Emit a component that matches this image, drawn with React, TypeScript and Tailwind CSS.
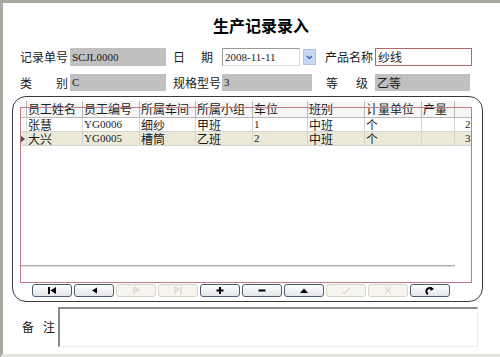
import React from 'react'

const cjk = "font-['Noto_Sans_CJK_SC',sans-serif]"
const serif = "font-['Liberation_Serif','Noto_Sans_CJK_SC',serif]"

const columns = [
  { title: '员工姓名', w: 'w-[56px]' },
  { title: '员工编号', w: 'w-[57px]' },
  { title: '所属车间', w: 'w-[56px]' },
  { title: '所属小组', w: 'w-[57px]' },
  { title: '车位', w: 'w-[55px]' },
  { title: '班别', w: 'w-[57px]' },
  { title: '计量单位', w: 'w-[57px]' },
  { title: '产量', w: 'w-[33px]' },
  { title: '', w: 'w-[40px]' },
]

const rows = [
  { cells: ['张慧', 'YG0006', '细纱', '甲班', '1', '中班', '个', '', '2'], current: false },
  { cells: ['大兴', 'YG0005', '槽筒', '乙班', '2', '中班', '个', '', '3'], current: true },
]

function NavIcon({ kind, disabled }: { kind: string; disabled?: boolean }) {
  const c = disabled ? '#cfcbb6' : '#000'
  return (
    <svg width="12" height="9" viewBox="0 0 12 9">
      {kind === 'first' && (
        <>
          <rect x="2" y="1" width="2" height="7" fill={c} />
          <polygon points="10,1 10,8 4.5,4.5" fill={c} />
        </>
      )}
      {kind === 'prev' && <polygon points="9,1.5 9,7.5 4,4.5" fill={c} />}
      {kind === 'next' && (
        <path d="M4 8 V1 L9 4 L5 5.5" fill="none" stroke={c} strokeWidth="1" />
      )}
      {kind === 'last' && (
        <>
          <path d="M3 8 V1 L7 3.5 L4 5.5" fill="none" stroke={c} strokeWidth="1" />
          <path d="M9 1 V8" stroke={c} strokeWidth="1" />
        </>
      )}
      {kind === 'add' && (
        <>
          <rect x="2.5" y="3.5" width="7" height="2" fill={c} />
          <rect x="5" y="1" width="2" height="7" fill={c} />
        </>
      )}
      {kind === 'del' && <rect x="2.5" y="3.5" width="7" height="2" fill={c} />}
      {kind === 'up' && <polygon points="2,7 10,7 6,2.5" fill={c} />}
      {kind === 'ok' && <path d="M2 6 L4 7.5 L10 2" fill="none" stroke={c} strokeWidth="1" />}
      {kind === 'cancel' && <path d="M3 1.5 L9 7.5 M9 1.5 L3 7.5" fill="none" stroke={c} strokeWidth="1" />}
      {kind === 'refresh' && (
        <>
          <path d="M4 8 A3 3 0 0 1 7 2.5" fill="none" stroke={c} strokeWidth="2" />
          <polygon points="6.5,0.5 10,3 6.5,5" fill={c} />
        </>
      )}
    </svg>
  )
}

const navButtons = [
  { kind: 'first' },
  { kind: 'prev' },
  { kind: 'next', disabled: true },
  { kind: 'last', disabled: true },
  { kind: 'add' },
  { kind: 'del' },
  { kind: 'up' },
  { kind: 'ok', disabled: true },
  { kind: 'cancel', disabled: true },
  { kind: 'refresh' },
]

export default function App() {
  return (
    <div className={`w-[500px] h-[357px] bg-white border-l-[3px] border-t-[3px] border-b-[3px] border-l-[#a9a9a1] border-t-[#a9a9a1] border-b-[#e4e4e0] overflow-hidden text-[#1a1a1a] ${cjk}`}>
      {/* title */}
      <div className="mt-[12px] h-[20px] pl-[210px] text-[16px] leading-[20px] font-bold text-black">
        生产记录录入
      </div>

      {/* row 1 */}
      <div className="mt-[13px] h-[18px] pl-[17px] flex items-stretch text-[12px]">
        <div className="w-[48px] flex items-center">记录单号</div>
        <div className={`ml-[2px] w-[96px] bg-[#c0c0c0] pl-[2px] flex items-center text-[11px] ${serif}`}>SCJL0000</div>
        <div className="ml-[7px] w-[40px] flex items-center justify-between">
          <span>日</span>
          <span>期</span>
        </div>
        <div className={`ml-[9px] w-[78px] bg-white border border-[#9a9a9a] border-r-[#dcdcdc] border-b-[#dcdcdc] pl-[2px] flex items-center text-[11px] ${serif}`}>2008-11-11</div>
        <div className="ml-[3px] w-[13px] my-[1px] bg-[#c9d7f6] border border-[#b0c0e6] flex items-center justify-center">
          <svg width="7" height="5" viewBox="0 0 7 5">
            <path d="M1 1 L3.5 3.5 L6 1" fill="none" stroke="#3060c0" strokeWidth="1.4" />
          </svg>
        </div>
        <div className="ml-[9px] w-[48px] flex items-center">产品名称</div>
        <div className="ml-[2px] w-[97px] bg-white border border-[#b06868] pl-[2px] flex items-center">纱线</div>
      </div>

      {/* row 2 */}
      <div className="mt-[8px] h-[17px] pl-[17px] flex items-stretch text-[12px]">
        <div className="w-[48px] flex items-center justify-between">
          <span>类</span>
          <span>别</span>
        </div>
        <div className={`ml-[2px] w-[96px] bg-[#c0c0c0] pl-[2px] flex items-center text-[11px] ${serif}`}>C</div>
        <div className="ml-[7px] w-[48px] flex items-center">规格型号</div>
        <div className={`ml-[1px] w-[90px] bg-[#c0c0c0] pl-[2px] flex items-center text-[11px] ${serif}`}>3</div>
        <div className="ml-[14px] w-[42px] flex items-center justify-between">
          <span>等</span>
          <span>级</span>
        </div>
        <div className="ml-[7px] w-[95px] bg-[#c0c0c0] pl-[2px] flex items-center">乙等</div>
      </div>

      {/* grid panel */}
      <div className="mt-[5px] ml-[9px] w-[471px] h-[206px] rounded-[14px] border border-[#3a3a3a] relative pt-[4px] pl-[7px]">
        <div className="w-[451px] h-[166px] overflow-hidden flex flex-col">
          <div className="w-[510px] flex h-[17px] bg-[#f6f6f4] border-b border-[#b8b8b8] text-[12px] leading-[16px]">
            <div className="w-[7px] border-r border-[#b8b8b8]" />
            {columns.map((col, i) => (
              <div key={i} className={`${col.w} shrink-0 border-r border-[#b8b8b8] pl-[1px] whitespace-nowrap`}>
                {col.title}
              </div>
            ))}
          </div>
          {rows.map((row, r) => (
            <div
              key={r}
              className={`w-[510px] flex h-[14px] border-b border-[#d4d4d4] text-[12px] leading-[13px] ${row.current ? 'bg-[#ece9d8]' : 'bg-white'}`}
            >
              <div className="w-[7px] border-r border-[#d4d4d4] flex items-center">
                {row.current && (
                  <svg width="5" height="8" viewBox="0 0 5 8">
                    <polygon points="0,0 5,4 0,8" fill="#4a4a4a" />
                  </svg>
                )}
              </div>
              {row.cells.map((cell, i) => (
                <div
                  key={i}
                  className={`${columns[i].w} shrink-0 border-r border-[#d4d4d4] whitespace-nowrap ${
                    i === 8 ? 'pl-[10px]' : 'pl-[1px]'
                  } ${/^[A-Z0-9]/.test(cell) ? `text-[11px] ${serif}` : ''}`}
                >
                  {cell}
                </div>
              ))}
            </div>
          ))}
          <div className="flex-1" />
          <div className="w-[435px] h-[2px] bg-[#a8a8a8] border-b border-[#e0e0e0]" />
        </div>

        {/* navigator */}
        <div className="mt-[17px] ml-[12px] flex gap-[2px]">
          {navButtons.map((b, i) => (
            <div
              key={i}
              className={`w-[40px] h-[13px] rounded-[3px] border flex items-center justify-center ${
                b.disabled
                  ? 'border-[#d8d4c4] bg-[#f5f4ee]'
                  : 'border-[#4e5e70] bg-gradient-to-b from-white to-[#e2e5ea]'
              }`}
            >
              <NavIcon kind={b.kind} disabled={b.disabled} />
            </div>
          ))}
        </div>

        {/* red frame overlay */}
        <div className="absolute left-[7px] top-[10px] w-[452px] h-[176px] border border-[#c27a86] pointer-events-none" />
      </div>

      {/* memo */}
      <div className="mt-[5px] pl-[19px] flex text-[12px]">
        <div className="w-[33px] h-[40px] flex items-center justify-between">
          <span>备</span>
          <span>注</span>
        </div>
        <div className="ml-[3px] w-[420px] h-[40px] bg-white border-t-2 border-l-2 border-r border-b border-t-[#8a8a8a] border-l-[#8a8a8a] border-r-[#ececec] border-b-[#ececec]" />
      </div>
    </div>
  )
}
